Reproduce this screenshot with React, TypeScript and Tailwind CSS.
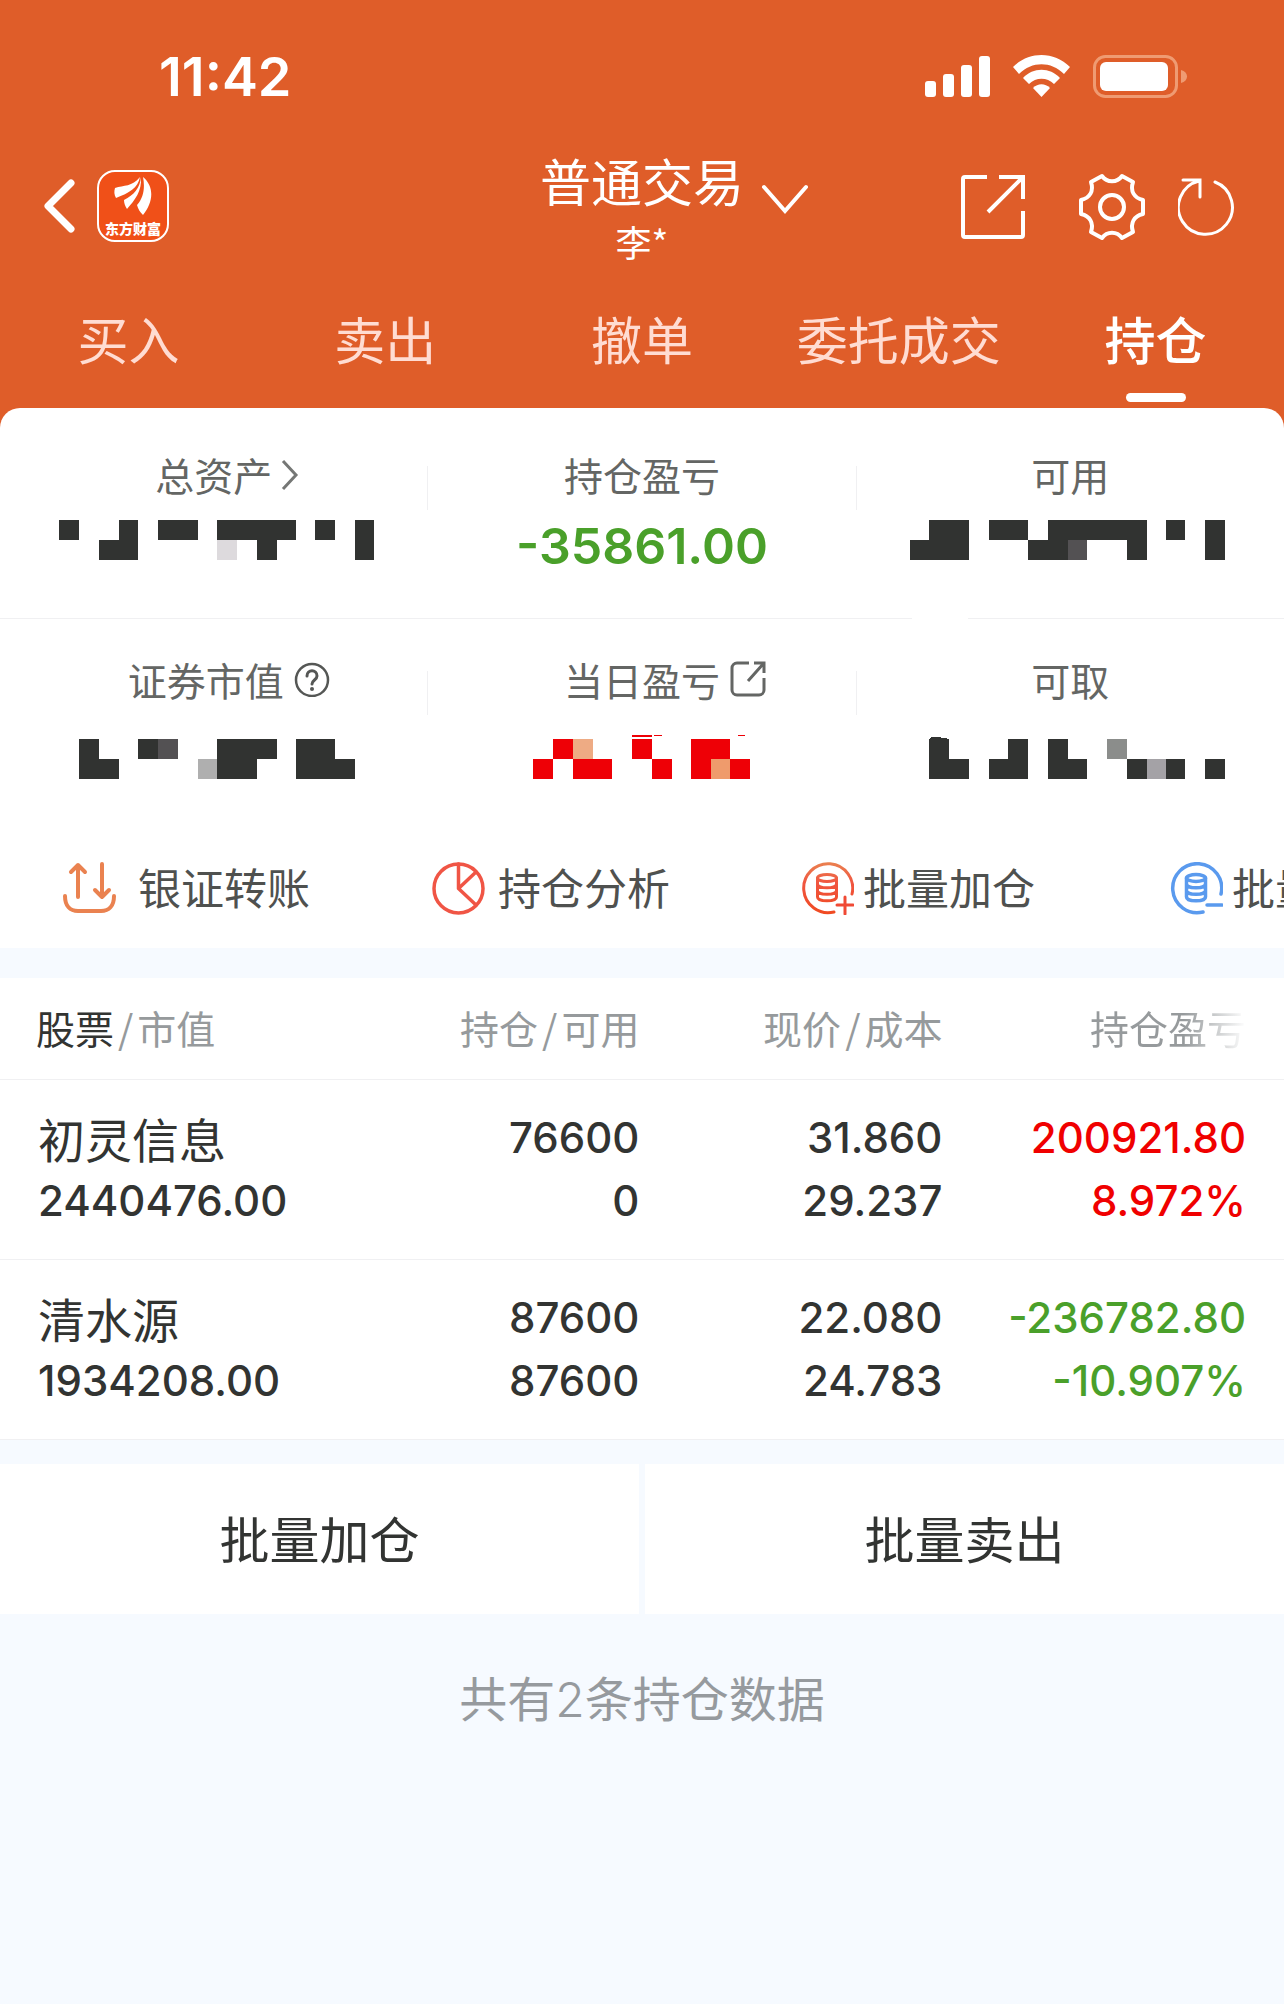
import React from 'react';

type Cell = [col: number, row: number, span: number, color?: string];

const DARK = '#313331';
const RED = '#ee0006';

// Hidden amounts: blocks on a grid of 65 columns across the three panels
const CELL_WIDTH = 19.75;

const hiddenAmounts: Record<string, Cell[]> = {
  total: [
    [3, 0, 1], [6, 0, 1], [8, 0, 2], [11, 0, 4], [16, 0, 1], [18, 0, 1],
    [5, 1, 2], [11, 1, 1, '#dddadd'], [13, 1, 1], [18, 1, 1],
  ],
  available: [
    [47, 0, 2], [50, 0, 2], [53, 0, 5], [59, 0, 1], [61, 0, 1],
    [46, 1, 3], [52, 1, 2], [54, 1, 1, '#535153'], [57, 1, 1], [61, 1, 1],
  ],
  market: [
    [4, 0, 1], [7, 0, 1], [8, 0, 1, '#535153'], [11, 0, 3], [15, 0, 2],
    [4, 1, 2], [10, 1, 1, '#afafaf'], [11, 1, 2], [15, 1, 3],
  ],
  today: [
    [28, 0, 1, RED], [29, 0, 1, '#eeab84'], [32, 0, 1, RED], [35, 0, 2, RED],
    [27, 1, 1, RED], [29, 1, 2, RED], [33, 1, 1, RED], [35, 1, 1, RED],
    [36, 1, 1, '#ef9b6c'], [37, 1, 1, RED],
  ],
  withdrawable: [
    [47, 0, 1], [51, 0, 1], [53, 0, 1], [56, 0, 1, '#8b8d8b'],
    [47, 1, 2], [50, 1, 2], [53, 1, 2], [57, 1, 1], [58, 1, 1, '#a4a2a6'],
    [59, 1, 1], [61, 1, 1],
  ],
};

const HiddenAmount: React.FC<{ name: string; panel: number; children?: React.ReactNode }> = ({
  name,
  panel,
  children,
}) => (
  <svg
    className="block w-full overflow-visible"
    viewBox={`${panel * 428} 0 428 40`}
    shapeRendering="crispEdges"
    aria-hidden="true"
  >
    {hiddenAmounts[name].map(([col, row, span, color]) => (
      <rect
        key={`${col}-${row}`}
        x={Math.round(col * CELL_WIDTH)}
        y={row * 20}
        width={Math.round((col + span) * CELL_WIDTH) - Math.round(col * CELL_WIDTH)}
        height={20}
        fill={color ?? DARK}
      />
    ))}
    {children}
  </svg>
);

const StatusBar = () => (
  <div className="flex h-[136px] items-center justify-between pt-[18px] pr-[96px] pl-[159px]">
    <span className="font-['Inter',sans-serif] text-[54px] leading-none font-semibold">11:42</span>
    <svg className="h-[44px] w-[264px]" viewBox="924 54 264 44" fill="#fff" aria-hidden="true">
      <rect x="925" y="80" width="11" height="16" rx="3" />
      <rect x="943" y="73" width="11" height="23" rx="3" />
      <rect x="961" y="64" width="11" height="32" rx="3" />
      <rect x="979" y="55" width="11" height="41" rx="3" />
      <path d="M1013 66c16-16 41-16 57 0l-6 7c-13-13-32-13-45 0z" />
      <path d="M1023 77c10-11 27-11 37 0l-6 6c-7-7-18-7-25 0z" />
      <path d="M1033 87c5-5 12-5 17 0l-8.500 9z" />
      <rect x="1094.500" y="55.500" width="82" height="40" rx="11" fill="none" stroke="#ef9b72" strokeWidth="3" />
      <rect x="1100" y="61" width="68" height="29" rx="6" />
      <path d="M1181 69c8 2 8 11 0 13z" fill="#ef9b72" />
    </svg>
  </div>
);

const AppLogo = () => (
  <div className="flex size-[72px] flex-col items-center justify-between rounded-[18px] border-2 border-white bg-[#f05018] pt-1 pb-1">
    <svg className="h-10 w-[38px]" viewBox="0 0 38 40" fill="#fff" aria-hidden="true">
      <path d="M1 12c9-3 17-1 25-11-2 11-11 16-24 21-2-3-2-7-1-10z" />
      <path d="M27 1c1 14-6 23-14 32-2-3-3-6-3-9C20 19 26 12 27 1z" />
      <path d="M29 1c12 10 10 26 0 38-3-3-5-6-6-10 7-8 8-18 6-28z" />
    </svg>
    <span className="text-[14px] leading-4 font-black">东方财富</span>
  </div>
);

const Header = () => (
  <div className="grid h-[140px] grid-cols-[1fr_auto_1fr] items-center">
    <div className="flex items-center gap-[21px] pl-[42px]">
      <button aria-label="返回">
        <svg className="h-[56px] w-[34px]" viewBox="0 0 34 56" fill="none" stroke="#fff" strokeWidth="7" strokeLinecap="round" strokeLinejoin="round">
          <path d="M29 5 6 28l23 23" />
        </svg>
      </button>
      <AppLogo />
    </div>
    <button className="relative flex flex-col items-center pt-[10px]">
      <span className="text-[51px] leading-[60px]">普通交易</span>
      <span className="text-[36px] leading-[62px]">李*</span>
      <svg className="absolute top-[44px] left-full ml-[17px] h-8 w-[48px]" viewBox="0 0 48 32" fill="none" stroke="#fff" strokeWidth="4" strokeLinecap="round">
        <path d="m3 3 21 24L45 3" />
      </svg>
    </button>
    <div className="flex items-center justify-end pt-[2px] pr-[46px]">
      <button aria-label="分享" className="mr-[53px]">
        <svg className="size-16" viewBox="0 0 64 64" fill="none" stroke="#fff" strokeWidth="4">
          <path d="M26 2H4a2 2 0 0 0-2 2v56a2 2 0 0 0 2 2h56a2 2 0 0 0 2-2V36M38 2h24v22M62 2 27 37" />
        </svg>
      </button>
      <button aria-label="设置" className="mr-8">
        <svg className="size-[68px]" viewBox="0 0 68 68" fill="none" stroke="#fff" strokeWidth="4" strokeLinejoin="round">
          <path d="M24 3c5 7 15 7 20 0l11 6c-3 9 1 16 10 18v14c-9 2-13 9-10 18l-11 6c-5-7-15-7-20 0l-11-6c3-9-1-16-10-18V27c9-2 13-9 10-18z" />
          <circle cx="34" cy="34" r="12" />
        </svg>
      </button>
      <button aria-label="刷新">
        <svg className="size-[60px]" viewBox="0 0 60 60" fill="none" stroke="#fff" strokeWidth="3" strokeLinecap="round">
          <path d="M37 5a27 27 0 1 1-16-1M5 3h17v17" />
        </svg>
      </button>
    </div>
  </div>
);

const tabs = ['买入', '卖出', '撤单', '委托成交', '持仓'];

const Tabs = () => (
  <nav className="grid grid-cols-5">
    {tabs.map((tab) => {
      const active = tab === '持仓';
      return (
        <button
          key={tab}
          className={`flex h-[132px] flex-col items-center justify-between pt-[26px] pb-[6px] text-[51px] leading-[72px] ${
            active ? 'font-medium text-white' : 'text-[#ffdcd2]'
          }`}
        >
          {tab}
          {active && <span className="h-[9px] w-[60px] rounded-full bg-white" />}
        </button>
      );
    })}
  </nav>
);

interface StatProps {
  label: string;
  icon?: React.ReactNode;
  labelClass?: string;
  children: React.ReactNode;
}

const Stat: React.FC<StatProps> = ({ label, icon, labelClass = '', children }) => (
  <div>
    <div className={`flex justify-center text-[39px] leading-[56px] text-[#646664] ${labelClass}`}>
      <span className="relative">
        {label}
        {icon && <span className="absolute top-0 left-full flex h-full items-center">{icon}</span>}
      </span>
    </div>
    {children}
  </div>
);

const Divider = () => <div className="mt-5 h-11 w-px bg-[#f0f0f2]" />;

const Summary = () => (
  <section className="rounded-t-[20px] bg-white">
    <div className="grid h-[210px] grid-cols-[1fr_1px_1fr_1px_1fr] pt-[38px]">
      <Stat
        label="总资产"
        icon={
          <svg className="ml-2 h-9 w-5" viewBox="0 0 20 36" fill="none" stroke="#757775" strokeWidth="3">
            <path d="m3 5 13 14L3 33" />
          </svg>
        }
      >
        <div className="pt-[18px]">
          <HiddenAmount name="total" panel={0} />
        </div>
      </Stat>
      <Divider />
      <Stat label="持仓盈亏">
        <p className="pt-3 text-center font-['Inter',sans-serif] text-[50px] leading-[64px] font-semibold text-[#4aa02a]">
          -35861.00
        </p>
      </Stat>
      <Divider />
      <Stat label="可用">
        <div className="pt-[18px]">
          <HiddenAmount name="available" panel={2} />
        </div>
      </Stat>
    </div>
    <div className="grid grid-cols-[71%_1fr] gap-14">
      <span className="h-px bg-[#f0f0f2]" />
      <span className="h-px bg-[#f0f0f2]" />
    </div>
    <div className="grid h-[204px] grid-cols-[1fr_1px_1fr_1px_1fr] pt-8">
      <Stat
        label="证券市值"
        labelClass="pr-4"
        icon={
          <svg className="ml-2.5 size-9" viewBox="0 0 36 36" fill="none" stroke="#555755" strokeWidth="3">
            <circle cx="18" cy="19" r="16" strokeWidth="2.500" />
            <path d="M13 15c0-7 10-7 10 0 0 4-5 4-5 8" strokeLinecap="round" />
            <circle cx="18" cy="28" r="2" fill="#555755" stroke="none" />
          </svg>
        }
      >
        <div className="pt-8">
          <HiddenAmount name="market" panel={0} />
        </div>
      </Stat>
      <Divider />
      <Stat
        label="当日盈亏"
        icon={
          <svg className="ml-2.5 size-9" viewBox="0 0 36 36" fill="none" stroke="#646664" strokeWidth="3">
            <path d="M19 2H7a5 5 0 0 0-5 5v22a5 5 0 0 0 5 5h22a5 5 0 0 0 5-5V17M24 2h10v10M34 2 18 20" />
          </svg>
        }
      >
        <div className="pt-8">
          <HiddenAmount name="today" panel={1}>
            <path d="M632-4q10 1 20 0v2h-20zM654-4h8v1h-8zM737-3q4-2 9-1v1h-7z" fill={RED} />
          </HiddenAmount>
        </div>
      </Stat>
      <Divider />
      <Stat label="可取">
        <div className="pt-8">
          <HiddenAmount name="withdrawable" panel={2}>
            <path d="M929 0l1-2h10v1h6v1z" fill={DARK} />
          </HiddenAmount>
        </div>
      </Stat>
    </div>
  </section>
);

const Coins = () => (
  <>
    <ellipse cx="26" cy="16" rx="9.500" ry="3.500" />
    <path d="M16.500 16v19c0 5 19 5 19 0V16M16.500 22c0 5 19 5 19 0M16.500 28.500c0 5 19 5 19 0" />
  </>
);

const actions = [
  {
    label: '银证转账',
    gap: 'gap-[22px]',
    icon: (
      <g stroke="#ea8250" strokeWidth="4">
        <path d="M15 35V3M8 10l7-7 7 7M39 2v33M32 28l7 7 7-7" />
        <path d="M2 34c0 10 5 15 13 15h23c8 0 13-5 13-15" />
      </g>
    ),
  },
  {
    label: '持仓分析',
    gap: 'gap-[13px]',
    icon: (
      <g stroke="#f05545" strokeWidth="3.500">
        <circle cx="26.500" cy="26.500" r="24.500" />
        <path d="M26.500 2v24.500L44 43M26.500 26.500 44 10" />
      </g>
    ),
  },
  {
    label: '批量加仓',
    gap: 'gap-[9px]',
    icon: (
      <g stroke="url(#add)" strokeWidth="3">
        <defs>
          <linearGradient id="add" gradientUnits="userSpaceOnUse" x1="0" y1="0" x2="0" y2="53">
            <stop offset="0" stopColor="#ea8250" />
            <stop offset="0.4" stopColor="#f05540" />
            <stop offset="1" stopColor="#f04a20" />
          </linearGradient>
        </defs>
        <path d="M51 32A24.500 24.500 0 1 0 33 50" />
        <Coins />
        <path d="M36 43h16M44 35v17" stroke="#f04a35" />
      </g>
    ),
  },
  {
    label: '批量卖出',
    gap: 'gap-[9px]',
    icon: (
      <g stroke="#5a9aee" strokeWidth="3.500">
        <path d="M51 32A24.500 24.500 0 1 0 33 50" />
        <Coins />
        <path d="M37 43h15" />
      </g>
    ),
  },
];

const QuickActions = () => (
  <div className="flex h-[125px] overflow-hidden bg-white pt-[6px] pl-[63px] font-['Inter','Noto_Sans_CJK_SC',sans-serif]">
    {actions.map((action) => (
      <button
        key={action.label}
        className={`flex w-[369px] shrink-0 items-center text-[43px] leading-[60px] text-[#4f514f] ${action.gap}`}
      >
        <svg className="size-[53px] shrink-0" viewBox="0 0 53 53" fill="none" strokeLinecap="round" strokeLinejoin="round">
          {action.icon}
        </svg>
        {action.label}
      </button>
    ))}
  </div>
);

const holdings = [
  {
    name: '初灵信息',
    value: '2440476.00',
    shares: '76600',
    usable: '0',
    price: '31.860',
    cost: '29.237',
    profit: '200921.80',
    rate: '8.972%',
    tone: 'text-[#f00000]',
  },
  {
    name: '清水源',
    value: '1934208.00',
    shares: '87600',
    usable: '87600',
    price: '22.080',
    cost: '24.783',
    profit: '-236782.80',
    rate: '-10.907%',
    tone: 'text-[#4aa02a]',
  },
];

const Pair: React.FC<{ top: string; bottom: string }> = ({ top, bottom }) => (
  <>
    <div>{top}</div>
    <div>{bottom}</div>
  </>
);

const Holdings = () => (
  <table className="mt-[30px] w-full table-fixed bg-white text-[#323432]">
    <thead className="text-[39px] leading-[56px] text-[#969a9c]">
      <tr className="h-[101px] border-b border-[#f0f0f2] text-right">
        <th className="w-[26.2%] pb-[3px] pl-9 text-left font-normal">
          <span className="text-[#323432]">股票</span>
          <span className="px-1">/</span>市值
        </th>
        <th className="w-[23.6%] pb-[3px] font-normal">持仓<span className="px-1">/</span>可用</th>
        <th className="w-[23.6%] pb-[3px] font-normal">现价<span className="px-1">/</span>成本</th>
        <th className="pr-[38px] pb-[3px] font-normal">
          <span className="bg-linear-to-r from-[#969a9c] from-60% to-white bg-clip-text text-transparent">
            持仓盈亏
          </span>
        </th>
      </tr>
    </thead>
    <tbody className="font-['Inter',sans-serif] text-[42px] leading-[63px] font-medium">
      {holdings.map((item) => (
        <tr key={item.name} className="h-[180px] border-b border-[#f0f0f2] text-right">
          <td className="pl-[38px] text-left">
            <div className="font-['Noto_Sans_CJK_SC',sans-serif] text-[47px] font-normal">{item.name}</div>
            <div>{item.value}</div>
          </td>
          <td><Pair top={item.shares} bottom={item.usable} /></td>
          <td><Pair top={item.price} bottom={item.cost} /></td>
          <td className={`pr-[38px] ${item.tone}`}>
            <Pair top={item.profit} bottom={item.rate} />
          </td>
        </tr>
      ))}
    </tbody>
  </table>
);

export default function App() {
  return (
    <div className="min-h-screen bg-[#f6faff] font-['Noto_Sans_CJK_SC',sans-serif]">
      <div className="bg-[#df5d29]">
        <header className="text-white">
          <StatusBar />
          <Header />
          <Tabs />
        </header>
        <Summary />
      </div>
      <QuickActions />
      <Holdings />
      <div className="mt-6 grid grid-cols-2 gap-[6px] text-[50px] leading-[72px] text-[#323432]">
        <button className="h-[150px] bg-white pb-[3px]">批量加仓</button>
        <button className="h-[150px] bg-white pb-[3px]">批量卖出</button>
      </div>
      <p className="pt-[46px] text-center text-[48px] leading-[72px] text-[#969a9e]">
        共有<span className="font-['Inter',sans-serif] font-light">2</span>条持仓数据
      </p>
    </div>
  );
}
